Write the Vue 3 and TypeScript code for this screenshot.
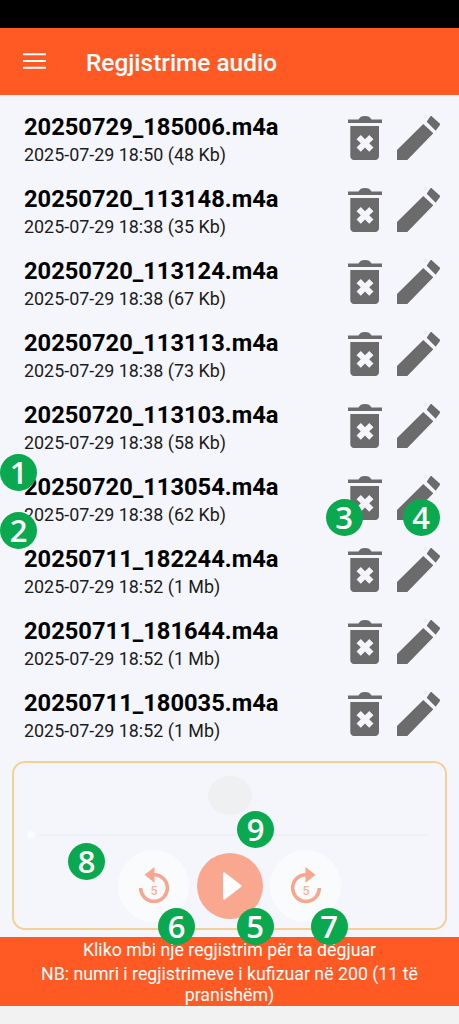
<script setup lang="ts">
const recordings = [
  { name: '20250729_185006.m4a', meta: '2025-07-29 18:50 (48 Kb)' },
  { name: '20250720_113148.m4a', meta: '2025-07-29 18:38 (35 Kb)' },
  { name: '20250720_113124.m4a', meta: '2025-07-29 18:38 (67 Kb)' },
  { name: '20250720_113113.m4a', meta: '2025-07-29 18:38 (73 Kb)' },
  { name: '20250720_113103.m4a', meta: '2025-07-29 18:38 (58 Kb)' },
  { name: '20250720_113054.m4a', meta: '2025-07-29 18:38 (62 Kb)' },
  { name: '20250711_182244.m4a', meta: '2025-07-29 18:52 (1 Mb)' },
  { name: '20250711_181644.m4a', meta: '2025-07-29 18:52 (1 Mb)' },
  { name: '20250711_180035.m4a', meta: '2025-07-29 18:52 (1 Mb)' },
]
const badges = [
  { n: 1, x: 18.5, y: 472 },
  { n: 2, x: 18.5, y: 530 },
  { n: 3, x: 344, y: 517 },
  { n: 4, x: 421, y: 517 },
  { n: 5, x: 255, y: 926.5 },
  { n: 6, x: 176.5, y: 926.5 },
  { n: 7, x: 329, y: 926.5 },
  { n: 8, x: 86.5, y: 861.5 },
  { n: 9, x: 255.5, y: 829.5 },
]
</script>

<template>
  <div class="screen">
    <div class="status"></div>
    <header class="bar">
      <svg class="menu" width="23" height="16" viewBox="0 0 23 16">
        <path d="M0 1.200h23M0 8h23M0 14.800h23" stroke="#fff" stroke-width="2" fill="none" />
      </svg>
      <h1 class="title">Regjistrime audio</h1>
    </header>

    <ul class="list">
      <li v-for="r in recordings" :key="r.name" class="row">
        <div class="info">
          <div class="name">{{ r.name }}</div>
          <div class="meta">{{ r.meta }}</div>
        </div>
        <svg class="trash" width="34" height="44" viewBox="0 0 34 44">
          <path d="M0 7V3.500h10.500C12 1 13.500 0 17 0s5 1 6.500 3.500H34V7z" fill="#6b6b6b" />
          <path
            fill-rule="evenodd"
            d="M2.300 10H31v30.300c0 2-1.500 3.700-3.700 3.700H6c-2.200 0-3.700-1.700-3.700-3.700zM12.800 19l-4.300 4.300 4.300 4-4.300 4.200 4.300 4.300 4.200-4.300 4.200 4.300 4.300-4.300-4.300-4.200 4.300-4-4.300-4.300-4.200 4.200z"
            fill="#6b6b6b"
          />
        </svg>
        <svg class="pencil" width="43" height="44" viewBox="0 0 43 44">
          <path d="M0 34 26.300 8l10 9.300L10.300 44H0z" fill="#6b6b6b" />
          <path d="M29.700 5.700 33 .7c.6-.7 1.400-.9 2-.3l7.500 6.800c.6.600.7 1.400.2 2L38.700 14.700z" fill="#6b6b6b" />
        </svg>
      </li>
    </ul>

    <section class="player">
      <div class="blob"></div>
      <div class="track">
        <span class="knob"></span>
        <span class="line"></span>
      </div>
      <div class="controls">
        <button class="round side" aria-label="-5">
          <svg width="32" height="37" viewBox="0 0 32 37">
            <path d="M16 7.700a13.300 13.300 0 1 1-13.300 13.300" fill="none" stroke="#f7a78f" stroke-width="3.600" />
            <path d="M16.500 0v15.700L6.500 7.800z" fill="#f7a78f" />
            <text x="16" y="27.500" class="five">5</text>
          </svg>
        </button>
        <button class="round play" aria-label="play">
          <svg width="20" height="28" viewBox="0 0 20 28">
            <path d="M1 1.500v25c0 1 1 1.400 1.800 1L19 15c.8-.5.8-1.500 0-2L2.800.5C2 0 1 .5 1 1.500z" fill="#fff" />
          </svg>
        </button>
        <button class="round side" aria-label="+5">
          <svg width="32" height="37" viewBox="0 0 32 37">
            <path d="M16 7.700a13.300 13.300 0 1 0 13.300 13.300" fill="none" stroke="#f7a78f" stroke-width="3.600" />
            <path d="M15.500 0v15.700L25.500 7.800z" fill="#f7a78f" />
            <text x="16" y="27.500" class="five">5</text>
          </svg>
        </button>
      </div>
    </section>

    <footer class="foot">
      <p>Kliko mbi nje regjistrim për ta dëgjuar</p>
      <p>NB: numri i regjistrimeve i kufizuar në 200 (11 të pranishëm)</p>
    </footer>

    <span
      v-for="b in badges"
      :key="b.n"
      class="badge"
      :style="{ left: b.x - 18.5 + 'px', top: b.y - 18.5 + 'px' }"
    >{{ b.n }}</span>
  </div>
</template>

<style scoped>
.screen {
  position: relative;
  display: flex;
  flex-direction: column;
  width: 459px;
  height: 1024px;
  overflow: hidden;
  background: #f2f2f2;
  font-family: Roboto, sans-serif;
}
.status {
  height: 28px;
  background: #000;
}
.bar {
  display: flex;
  align-items: center;
  height: 67px;
  padding-left: 22.500px;
  background: #ff5a23;
}
.menu {
  flex: none;
  margin-top: -1px;
}
.title {
  margin: 1px 0 0 40.500px;
  color: #fff;
  font-size: 24.400px;
  font-weight: 500;
}
.list {
  margin: 0;
  padding: 0;
  list-style: none;
  height: 656px;
  background: #f5f6fb;
}
.row {
  display: flex;
  align-items: flex-start;
  height: 72px;
  padding: 19px 19px 0 24px;
  box-sizing: border-box;
}
.info {
  flex: 1;
}
.name {
  color: #000;
  font-size: 23.700px;
  font-weight: 700;
  line-height: 27px;
}
.meta {
  margin-top: 3px;
  color: #1c1c1c;
  font-size: 17.900px;
  line-height: 21px;
}
.trash {
  margin-top: 2px;
}
.pencil {
  margin: 2px 0 0 15px;
}
.player {
  position: relative;
  display: flex;
  flex-direction: column;
  align-items: center;
  height: 186px;
  padding: 0 12px;
  box-sizing: border-box;
  background: #f5f6fb;
}
.player::before {
  content: '';
  position: absolute;
  inset: 10px 12px 7px;
  border: 2.500px solid #f6cf95;
  border-radius: 13px;
  pointer-events: none;
}
.blob {
  width: 44px;
  height: 39px;
  margin-top: 25px;
  border-radius: 50%;
  background: #eff0f2;
}
.track {
  display: flex;
  align-items: center;
  align-self: stretch;
  gap: 4px;
  height: 6px;
  margin: 17px 19px 0 15px;
}
.knob {
  width: 8px;
  height: 8px;
  border-radius: 50%;
  background: #fbfbfd;
}
.line {
  flex: 1;
  height: 2px;
  background: #eef0f4;
}
.controls {
  display: flex;
  align-items: center;
  justify-content: center;
  gap: 7.500px;
  margin-top: 12px;
}
.round {
  display: flex;
  align-items: center;
  justify-content: center;
  padding: 0;
  border: 0;
  border-radius: 50%;
}
.side {
  width: 71px;
  height: 72px;
  background: #fafbfd;
}
.side svg {
  margin-bottom: 2px;
}
.play {
  width: 66px;
  height: 66px;
  background: #f9a88f;
}
.play svg {
  margin-left: 5px;
}
.five {
  fill: #f7b29d;
  font-family: Roboto, sans-serif;
  font-size: 12.500px;
  font-weight: 500;
  text-anchor: middle;
}
.foot {
  display: flex;
  flex-direction: column;
  gap: 3px;
  height: 69px;
  padding: 2.500px 16px 0;
  box-sizing: border-box;
  background: #ff5a23;
  color: #fff;
  font-size: 17.750px;
  line-height: 21px;
  text-align: center;
}
.foot p {
  margin: 0;
}
.badge {
  position: absolute;
  width: 37px;
  height: 37px;
  border-radius: 50%;
  background: #0aa84f;
  color: #fff;
  font-family: 'Open Sans', sans-serif;
  font-size: 31px;
  font-weight: 600;
  line-height: 37px;
  text-align: center;
}
</style>
